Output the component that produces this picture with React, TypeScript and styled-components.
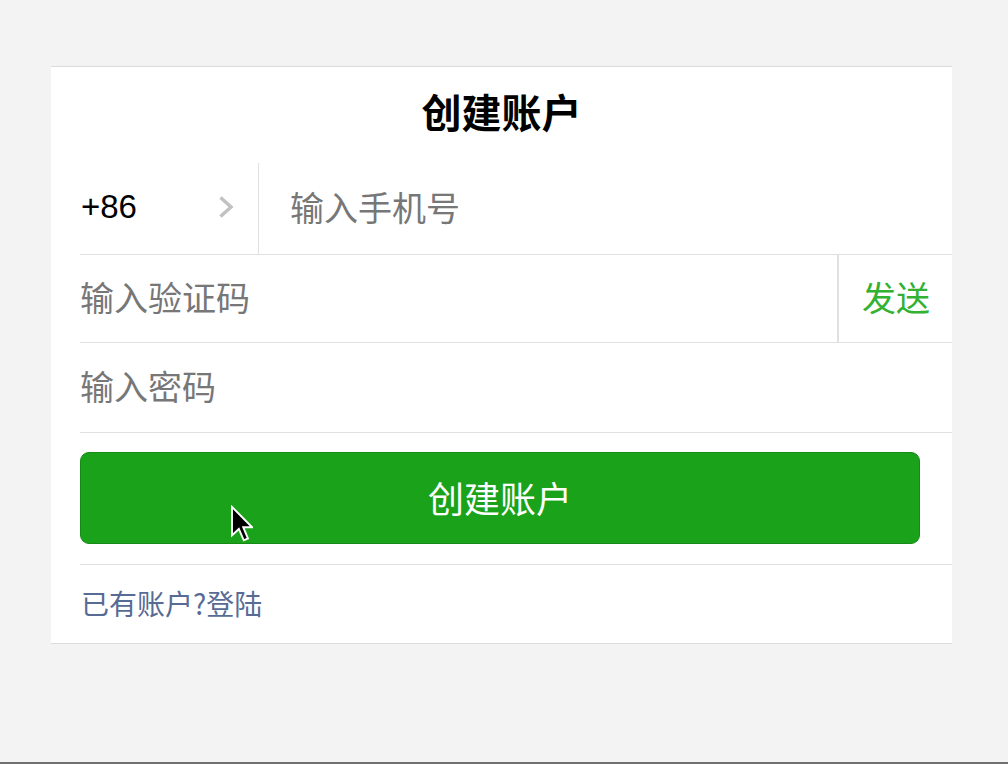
import styled, { createGlobalStyle } from "styled-components";

const GlobalStyle = createGlobalStyle`
  html, body {
    margin: 0;
    padding: 0;
    background: #f3f3f3;
  }
  body {
    font-family: "Noto Sans CJK SC", "Noto Sans", sans-serif;
  }
`;

function App() {
  return (
    <>
      <GlobalStyle />
      <Page>
        <Card>
          <Title>创建账户</Title>
          <Form>
            <Row height={91}>
              <CountryCell>
                <Code>+86</Code>
                <Chevron viewBox="0 0 16 24">
                  <path d="M2.5 2.5 L13 12 L2.5 21.5" />
                </Chevron>
              </CountryCell>
              <PhoneInput placeholder="输入手机号" />
            </Row>
            <Row height={87}>
              <Input placeholder="输入验证码" />
              <SendButton type="button">发送</SendButton>
            </Row>
            <Row height={89}>
              <Input type="password" placeholder="输入密码" />
            </Row>
            <ButtonArea>
              <SubmitButton type="button">
                创建账户
                <Cursor viewBox="0 0 12 20">
                  <path d="M1 1 L1 16 L4.6 12.6 L7.2 18.6 L9.4 17.6 L6.9 11.7 L11.6 11.7 Z" />
                </Cursor>
              </SubmitButton>
            </ButtonArea>
            <Footer>
              <LoginLink href="#">已有账户?登陆</LoginLink>
            </Footer>
          </Form>
        </Card>
        <BottomBar />
      </Page>
    </>
  );
}

export default App;

const Page = styled.div`
  width: 1008px;
  height: 764px;
  padding-top: 66px;
  box-sizing: border-box;
  position: relative;
  display: flex;
  flex-direction: column;
  align-items: flex-start;
`;

const Card = styled.div`
  margin-left: 51px;
  width: 901px;
  background: #fff;
  border-top: 1px solid #dcdcdc;
  border-bottom: 1px solid #dcdcdc;
`;

const Title = styled.h1`
  margin: 0;
  height: 96px;
  box-sizing: border-box;
  padding-bottom: 9px;
  display: flex;
  align-items: center;
  justify-content: center;
  font-size: 40px;
  font-weight: 700;
  color: #000;
`;

const Form = styled.div`
  padding-left: 29px;
`;

const Row = styled.div<{ height: number }>`
  height: ${({ height }) => height}px;
  display: flex;
  align-items: stretch;
  border-bottom: 1px solid #e0e0e0;
`;

const CountryCell = styled.div`
  width: 179px;
  box-sizing: border-box;
  display: flex;
  align-items: center;
  justify-content: space-between;
  padding: 0 24px 3px 0;
  border-right: 1px solid #e0e0e0;
`;

const Code = styled.span`
  font-family: "Liberation Sans", Arial, sans-serif;
  font-size: 33px;
  color: #000;
  padding-left: 1px;
`;

const Chevron = styled.svg`
  width: 16px;
  height: 24px;
  fill: none;
  stroke: #c2c2c2;
  stroke-width: 3.5;
`;

const Input = styled.input`
  flex: 1;
  min-width: 0;
  border: none;
  outline: none;
  background: transparent;
  font-family: "Noto Sans CJK SC", sans-serif;
  font-size: 34px;
  color: #333;
  padding: 0 0 4px 0;
  &::placeholder {
    color: #777;
  }
`;

const PhoneInput = styled(Input)`
  padding-left: 31px;
`;

const SendButton = styled.button`
  width: 115px;
  border: none;
  border-left: 2px solid #e0e0e0;
  background: transparent;
  font-family: "Noto Sans CJK SC", sans-serif;
  font-size: 34px;
  color: #33b133;
  padding: 0 0 4px 23px;
  text-align: left;
  cursor: pointer;
`;

const ButtonArea = styled.div`
  padding: 19px 32px 20px 0;
  border-bottom: 1px solid #e0e0e0;
`;

const SubmitButton = styled.button`
  position: relative;
  width: 100%;
  height: 92px;
  border: 1px solid #168a16;
  border-radius: 9px;
  background: #1aa31a;
  color: #fff;
  font-family: "Noto Sans CJK SC", sans-serif;
  font-size: 36px;
  padding-bottom: 4px;
  cursor: pointer;
`;

const Cursor = styled.svg`
  position: absolute;
  left: 149px;
  top: 52px;
  width: 23px;
  height: 38px;
  fill: #000;
  stroke: #fff;
  stroke-width: 1;
`;

const Footer = styled.div`
  height: 78px;
  display: flex;
  align-items: center;
  padding-bottom: 2px;
  box-sizing: border-box;
`;

const LoginLink = styled.a`
  font-size: 28px;
  color: #576b95;
  text-decoration: none;
  padding-left: 1px;
`;

const BottomBar = styled.div`
  position: absolute;
  left: 0;
  right: 0;
  bottom: 0;
  height: 2px;
  background: #707070;
`;
